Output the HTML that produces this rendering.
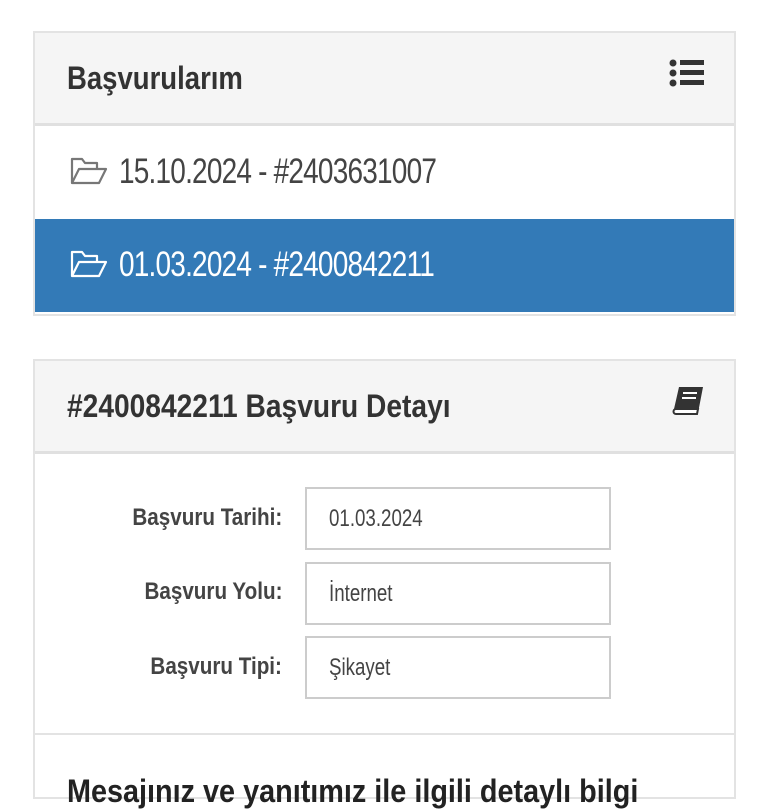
<!DOCTYPE html>
<html><head><meta charset="utf-8"><style>
*{box-sizing:border-box;margin:0;padding:0}
body{width:768px;height:768px;overflow:hidden;background:#fff;font-family:"Liberation Sans",sans-serif;color:#333}
.panel{position:absolute;left:33px;width:703px;border:2px solid #e3e3e3;background:#fff}
.hd{height:93px;background:#f5f5f5;border-bottom:3px solid #e0e0e0;position:relative}
.hd h2{position:absolute;left:32px;top:27px;font-size:32px;font-weight:bold;color:#333;transform-origin:left center;white-space:nowrap}
.item{height:93px;position:relative;font-size:35px;letter-spacing:-1px}
.item span{position:absolute;left:84px;top:26px;transform:scaleX(0.8);transform-origin:left center;white-space:nowrap}
.item svg{position:absolute;left:35px;top:30px}
.sel{background:#337ab7;color:#fff}
.lbl{position:absolute;right:452px;font-size:24px;font-weight:bold;color:#444;text-align:right;white-space:nowrap;transform:scaleX(0.86);transform-origin:right center}
.inp{position:absolute;left:270px;width:306px;height:63px;border:2px solid #ccc;color:#444}
.inp span{position:absolute;left:22px;top:16px;font-size:24px;transform:scaleX(0.78);transform-origin:left center;white-space:nowrap}
</style></head><body>
<div class="panel" style="top:31px;height:285px">
<div class="hd"><h2 style="transform:scaleX(0.86)">Başvurularım</h2>
<svg style="position:absolute;left:634px;top:26px" width="35" height="28" viewBox="0 0 35 28"><circle cx="4" cy="4" r="3.5" fill="#333"/><circle cx="4" cy="14" r="3.5" fill="#333"/><circle cx="4" cy="24" r="3.5" fill="#333"/><rect x="11" y="1" width="24" height="5" fill="#333"/><rect x="11" y="11" width="24" height="5" fill="#333"/><rect x="11" y="21" width="24" height="5" fill="#333"/></svg>
</div>
<div class="item" style="color:#444"><svg width="38" height="30" viewBox="0 0 38 30"><path d="M2 27V3h10l3 4h12v5M2 27l7-14h27l-7 14z" fill="none" stroke="#777" stroke-width="2.2" stroke-linejoin="round"/></svg><span>15.10.2024 - #2403631007</span></div>
<div class="item sel"><svg width="38" height="30" viewBox="0 0 38 30"><path d="M2 27V3h10l3 4h12v5M2 27l7-14h27l-7 14z" fill="none" stroke="#fff" stroke-width="2.2" stroke-linejoin="round"/></svg><span>01.03.2024 - #2400842211</span></div>
</div>
<div class="panel" style="top:359px;height:440px">
<div class="hd"><h2 style="transform:scaleX(0.88)">#2400842211 Başvuru Detayı</h2>
<svg style="position:absolute;left:636px;top:24px" width="34" height="32" viewBox="0 0 34 32"><path d="M8 2h24l-5 26H4a3 3 0 0 1-1-4z" fill="#333"/><path d="M5 24h22l-1 5H5a2.5 2.5 0 0 1 0-5z" fill="#fff" stroke="#333" stroke-width="2"/><rect x="12" y="7" width="14" height="2" fill="#fff"/><rect x="11" y="12" width="14" height="2" fill="#fff"/></svg>
</div>
<div class="lbl" style="top:143px">Başvuru Tarihi:</div>
<div class="inp" style="top:126px"><span>01.03.2024</span></div>
<div class="lbl" style="top:217px">Başvuru Yolu:</div>
<div class="inp" style="top:201px"><span>İnternet</span></div>
<div class="lbl" style="top:292px">Başvuru Tipi:</div>
<div class="inp" style="top:275px"><span>Şikayet</span></div>
<div style="position:absolute;left:0;right:0;top:372px;border-top:2px solid #e3e3e3"></div>
<div style="position:absolute;left:32px;top:412px;font-size:32px;font-weight:bold;color:#222;white-space:nowrap;transform:scaleX(0.9);transform-origin:left center">Mesajınız ve yanıtımız ile ilgili detaylı bilgi</div>
</div>
</body></html>
